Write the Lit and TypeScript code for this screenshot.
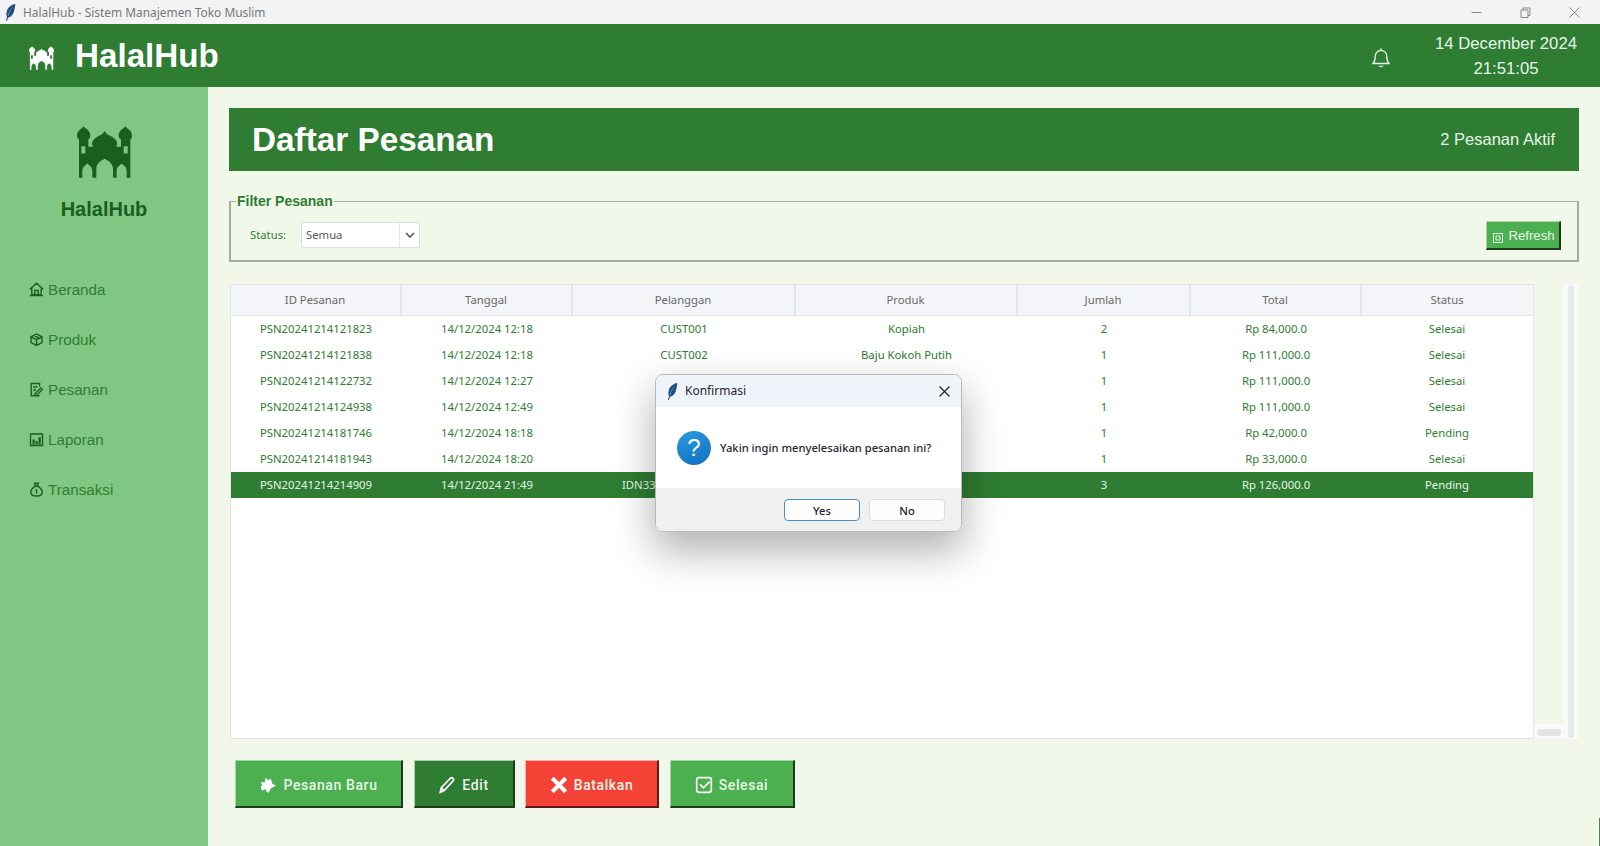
import { LitElement, css, html, svg } from "lit";
import { customElement } from "lit/decorators.js";
import { classMap } from "lit/directives/class-map.js";

const columns = ["ID Pesanan", "Tanggal", "Pelanggan", "Produk", "Jumlah", "Total", "Status"];

// pelanggan and produk are behind the dialog from the third row on, so they stay empty
const rows = [
    ["PSN20241214121823", "14/12/2024 12:18", "CUST001", "Kopiah", "2", "Rp 84,000.0", "Selesai"],
    ["PSN20241214121838", "14/12/2024 12:18", "CUST002", "Baju Kokoh Putih", "1", "Rp 111,000.0", "Selesai"],
    ["PSN20241214122732", "14/12/2024 12:27", "", "", "1", "Rp 111,000.0", "Selesai"],
    ["PSN20241214124938", "14/12/2024 12:49", "", "", "1", "Rp 111,000.0", "Selesai"],
    ["PSN20241214181746", "14/12/2024 18:18", "", "", "1", "Rp 42,000.0", "Pending"],
    ["PSN20241214181943", "14/12/2024 18:20", "", "", "1", "Rp 33,000.0", "Selesai"],
    ["PSN20241214214909", "14/12/2024 21:49", "IDN3321784590281456", "", "3", "Rp 126,000.0", "Pending"],
];

const mosque = svg`<path fill-rule="evenodd" d="M20 0C14 9 0 12 0 28C0 34 3 38 6 40V155H160V40C163 38 165 34 165 28C165 12 151 9 145 0C139 9 125 12 125 28C125 34 128 38 132 40V62H117C130 45 105 30 96 27C90 25 86 20 83 14C80 20 76 25 70 27C61 30 36 45 49 62H34V40C37 38 40 34 40 28C40 12 26 9 20 0ZM13 60H25V82H13ZM140 60H152V82H140ZM58 155V130C58 112 70 105 83 98C96 105 108 112 108 130V155ZM16 155V135C16 122 25 118 31 112C37 118 46 122 46 135V155ZM119 155V135C119 122 128 118 134 112C140 118 149 122 149 135V155Z"/>`;

const feather = html`<svg class="feather" viewBox="0 0 10 16">
    <path fill="#1f4e79" d="M9.6 0C6 .6 2.8 3 1.6 6.5.9 8.600 1 10.600 1.700 12.300L.8 16h.9l.9-3C5 12.600 7.400 10 8.300 6.800 8.900 4.600 9.400 2.200 9.600 0Z"/>
    <path fill="#8fb4d9" d="M7.800 2.200C5.600 4.600 3.800 8 2.800 11.600L2.300 11.400C3.200 7.800 5.200 4.400 7.800 2.200Z"/>
</svg>`;

const navIcons: Record<string, unknown> = {
    Beranda: svg`<path d="M.8 7.200 7.500 1.200l6.700 6M2.800 6.200V12.600h9.400V6.200M5.800 12.600V8.400h3.400v4.200M.8 13.600h13.400"/>`,
    Produk: svg`<path d="M7.500 2 13 4.800V10.600L7.500 13.400 2 10.600V4.800ZM2 4.800 7.500 7.600 13 4.800M7.500 7.600V13.400M4.800 3.400 10.200 6.200"/>`,
    Pesanan: svg`<path d="M10.600 4.600V1.500H2.200V13.800H10.600M6 11.800 11.800 6l1.600 1.600-5.800 5.800H6ZM4.200 5H8.400M4.200 8H7"/>`,
    Laporan: svg`<path d="M1.500 2H13.500V13.500H1.500Z"/><path fill="currentColor" stroke="none" d="M3.500 7.500H5.700V12.500H3.500ZM6.500 9H8.700V12.500H6.500ZM9.500 5H11.700V12.500H9.500Z"/>`,
    Transaksi: svg`<path d="M5.600 1.200H9.400L8.600 4H6.400ZM6 4.400C3.400 6 1.800 8 1.800 10.200 1.800 12.600 4 14 7.500 14S13.200 12.600 13.200 10.200C13.200 8 11.600 6 9 4.400ZM7.500 7.400V11.600M6.600 7.600H7.600"/>`,
};

const nav = ["Beranda", "Produk", "Pesanan", "Laporan", "Transaksi"];

@customElement("app-root")
export class AppRoot extends LitElement {
    static styles = css`
        :host {
            display: block;
            position: relative;
            width: 100%;
            height: 100vh;
            overflow: hidden;
            font-family: "Liberation Sans", Arial, sans-serif;
            background: #f1f8e9;
        }

        .titlebar {
            height: 24px;
            background: #f3f3f3;
            display: flex;
            align-items: center;
            padding-left: 5px;
            font-family: "Noto Sans", sans-serif;
            font-size: 11.9px;
            color: #777;
        }

        .feather {
            width: 11px;
            height: 17px;
            flex: none;
        }

        .titlebar span {
            margin-left: 7px;
            flex: 1;
        }

        .winctl {
            display: flex;
            gap: 38px;
            padding-right: 20px;
        }

        .winctl svg {
            width: 11px;
            height: 11px;
            fill: none;
            stroke: #888;
            stroke-width: 1;
            display: block;
        }

        .topbar {
            height: 63px;
            background: #2e7d32;
            display: flex;
            align-items: center;
            padding-left: 29px;
            color: #fff;
        }

        .topbar .logo {
            width: 25px;
            height: 24px;
            fill: #fff;
            margin-top: 4px;
        }

        .brand {
            font-size: 33.2px;
            font-weight: bold;
            margin-left: 21px;
            flex: 1;
        }

        .bell {
            width: 20px;
            height: 21px;
            fill: none;
            stroke: #e8f5e9;
            stroke-width: 1.3;
            margin-top: 4px;
            margin-right: 1px;
        }

        .clock {
            width: 150px;
            margin: 0 19px 0 39px;
            text-align: center;
            font-size: 16.7px;
            line-height: 25px;
            color: #e8f5e9;
            white-space: nowrap;
            margin-top: 1px;
        }

        .layout {
            height: calc(100vh - 87px);
            display: flex;
        }

        .sidebar {
            width: 208px;
            background: #81c784;
            box-sizing: border-box;
            padding-top: 39px;
            flex: none;
        }

        .sidebar .logo {
            display: block;
            width: 55px;
            height: 52px;
            margin: 0 0 0 77px;
            fill: #1b5e20;
        }

        .side-name {
            margin-top: 20px;
            text-align: center;
            font-size: 20px;
            font-weight: bold;
            line-height: 23px;
            color: #1b5e20;
        }

        .nav {
            margin-top: 43px;
        }

        .nav-item {
            height: 50px;
            display: flex;
            align-items: center;
            padding-left: 29px;
            font-size: 15.2px;
            color: #2e7d32;
        }

        .nav-item svg {
            width: 15px;
            height: 15px;
            margin-right: 4px;
            margin-top: 1px;
            fill: none;
            stroke: #1b5e20;
            stroke-width: 1.4;
            color: #1b5e20;
        }

        .main {
            flex: 1;
            min-width: 0;
            padding: 21px 21px 0;
        }

        .banner {
            height: 63px;
            background: #2e7d32;
            display: flex;
            align-items: center;
            justify-content: space-between;
            padding: 0 24px 0 23px;
            color: #fff;
        }

        .banner h1 {
            margin: 0;
            font-size: 33.3px;
            font-weight: bold;
        }

        .banner span {
            font-size: 16.5px;
            color: #e8f5e9;
        }

        fieldset {
            margin: 22px 0 0;
            padding: 0 16px 0 19px;
            height: 69px;
            box-sizing: border-box;
            border: 2px solid #a6ac9c;
            border-top-width: 1.5px;
            display: flex;
            align-items: center;
        }

        legend {
            padding: 0 1px;
            margin-left: -14px;
            font-size: 14px;
            font-weight: bold;
            line-height: 16px;
            color: #2e7d32;
        }

        .filter {
            display: flex;
            align-items: center;
            width: 100%;
        }

        .filter label {
            font-family: "Noto Sans", sans-serif;
            font-size: 11.3px;
            color: #2e7d32;
            width: 51px;
        }

        .select {
            width: 119px;
            height: 26px;
            box-sizing: border-box;
            background: #fff;
            border: 1px solid #d9dee2;
            border-radius: 2px;
            display: flex;
            align-items: center;
            font-family: "Noto Sans", sans-serif;
            font-size: 11.3px;
            color: #555;
        }

        .select span {
            flex: 1;
            padding-left: 4px;
        }

        .select i {
            width: 19px;
            height: 24px;
            border-left: 1px solid #e4e7e9;
            display: flex;
            align-items: center;
            justify-content: center;
        }

        .select svg {
            width: 10px;
            height: 6px;
            fill: none;
            stroke: #555;
            stroke-width: 1.6;
        }

        .raised {
            display: flex;
            align-items: center;
            justify-content: center;
            flex: none;
            box-sizing: border-box;
            border-style: solid;
            border-width: 1px 2px 2px 1px;
            border-color: #a5d6a7 #1b3d1d #1b3d1d #a5d6a7;
            color: #e8f5e9;
            font-family: Roboto, sans-serif;
        }

        .refresh {
            margin-left: auto;
            margin-top: 2px;
            width: 75px;
            height: 29px;
            background: #4caf50;
            font-family: "Liberation Sans", sans-serif;
            font-size: 13.2px;
            gap: 5px;
            padding-left: 2px;
        }

        .refresh svg {
            width: 10px;
            height: 10px;
            margin-top: 6px;
            fill: none;
            stroke: #e8f5e9;
            stroke-width: 1;
        }

        .grid-area {
            margin-top: 22px;
            height: 455px;
            display: flex;
        }

        .tree {
            width: 1304px;
            box-sizing: border-box;
            border: 1px solid #e2e6df;
            background: #fff;
            flex: none;
            font-family: "Noto Sans", sans-serif;
            font-size: 11.3px;
            margin-left: 1px;
        }

        .row {
            display: grid;
            grid-template-columns: 171px 171px 223px 222px 173px 171px 171px;
            height: 26px;
            align-items: center;
            text-align: center;
            color: #2e7d32;
        }

        .row div {
            padding: 0 1px 2px 0;
        }

        .row.head {
            height: 31px;
            box-sizing: border-box;
            align-items: stretch;
            color: #6a6a6a;
            background: #f3f5f8;
            border-bottom: 1px solid #e2e5ea;
        }

        .row.head div {
            display: flex;
            align-items: center;
            justify-content: center;
            border-right: 2px solid #e2e5ea;
        }

        .row.head div:last-child {
            border-right: none;
        }

        .row.selected {
            background: #2e7d32;
            color: #e8f5e9;
        }

        .bars {
            width: 44px;
            display: grid;
            grid-template-columns: 29px 15px;
            grid-template-rows: 1fr 15px;
        }

        .vbar {
            grid-column: 2;
            grid-row: 1 / 3;
            background: #fafbf9;
            padding: 1px 4px 1px 5px;
            box-sizing: border-box;
        }

        .vbar div {
            height: 100%;
            background: #e7e8ea;
            border-radius: 3px;
        }

        .hbar {
            grid-column: 1;
            grid-row: 2;
            background: #fafbf9;
            padding: 5px 2px 3px 3px;
        }

        .hbar div {
            height: 100%;
            background: #e3e4e5;
            border-radius: 3px;
        }

        .actions {
            margin-top: 21px;
            display: flex;
            gap: 10.5px;
            padding-left: 6px;
        }

        .actions .raised {
            height: 48px;
            padding-top: 2px;
            font-size: 14px;
            font-weight: 500;
            letter-spacing: 0.6px;
            gap: 6px;
        }

        .actions svg {
            width: 18px;
            height: 18px;
            fill: none;
            stroke: #fff;
            stroke-width: 1.5;
        }

        .new {
            width: 168px;
            background: #4caf50;
        }

        .edit {
            width: 101px;
            background: #2e7d32;
        }

        .cancel {
            width: 134px;
            background: #f44336;
            border-color: #ffb3ac #5e1a14 #5e1a14 #ffb3ac !important;
        }

        .done {
            width: 125px;
            background: #4caf50;
        }

        .dialog {
            position: absolute;
            left: 655px;
            top: 374px;
            width: 307px;
            height: 158px;
            border: 1px solid #b5b8bc;
            box-sizing: border-box;
            border-radius: 8px;
            overflow: hidden;
            display: flex;
            flex-direction: column;
            font-family: "Noto Sans", sans-serif;
            font-size: 11.2px;
            color: #2a2430;
        }

        .shadow {
            position: absolute;
            left: 655px;
            top: 374px;
            width: 307px;
            height: 158px;
            border-radius: 8px;
            box-shadow: 0 18px 40px 2px rgba(0, 0, 0, 0.3);
        }

        .dlg-title {
            height: 32px;
            background: #eff3fa;
            display: flex;
            align-items: center;
            padding: 0 11px 0 11px;
            flex: none;
        }

        .dlg-title span {
            flex: 1;
            margin-left: 7px;
            margin-top: -2px;
            font-size: 12px;
        }

        .dlg-title svg.x {
            width: 11px;
            height: 11px;
            stroke: #222;
            stroke-width: 1.2;
            fill: none;
        }

        .dlg-body {
            height: 81px;
            background: #fff;
            display: flex;
            align-items: center;
            padding-left: 21px;
            gap: 9px;
            flex: none;
            font-weight: 500;
        }

        .qmark {
            width: 34px;
            height: 34px;
            border-radius: 50%;
            background: linear-gradient(160deg, #2a9be0, #0f6fc0);
            color: #fff;
            display: flex;
            align-items: center;
            justify-content: center;
            font-family: "Liberation Sans", sans-serif;
            font-size: 24px;
            flex: none;
        }

        .dlg-foot {
            flex: 1;
            background: #f0f0f0;
            display: flex;
            justify-content: flex-end;
            align-items: flex-start;
            gap: 9px;
            padding: 11px 16px 0 0;
        }

        .dlg-foot button {
            width: 76px;
            height: 22px;
            padding: 0;
            box-sizing: border-box;
            background: #fdfdfd;
            border: 1px solid #dcdcdc;
            border-radius: 4px;
            font: inherit;
            font-weight: 500;
            color: #2a2430;
        }

        .dlg-foot button.primary {
            border: 1.5px solid #4a90c8;
        }

        .sliver {
            position: absolute;
            right: 0;
            bottom: 0;
            width: 1px;
            height: 28px;
            background: #4f7f52;
        }
    `;

    render() {
        return html`
            <div class="titlebar">
                ${feather}
                <span>HalalHub - Sistem Manajemen Toko Muslim</span>
                <div class="winctl">
                    <svg viewBox="0 0 11 11"><path d="M.5 5.500h10"/></svg>
                    <svg viewBox="0 0 11 11"><path d="M1 3h7v7.500H1ZM3 3V1h7v7.500H8"/></svg>
                    <svg viewBox="0 0 11 11"><path d="M.5.500l10 10M10.500.500l-10 10"/></svg>
                </div>
            </div>
            <div class="topbar">
                <svg class="logo" viewBox="0 0 165 155">${mosque}</svg>
                <div class="brand">HalalHub</div>
                <svg class="bell" viewBox="0 0 20 21">
                    <path d="M2 16.500c2-2 2.200-3.600 2.200-7 0-3.400 2.400-6.200 5.800-6.200s5.800 2.800 5.800 6.200c0 3.400.2 5 2.200 7ZM10 1.200v2M8 18.800c.5 1 3.500 1 4 0"/>
                </svg>
                <div class="clock">14 December 2024<br />21:51:05</div>
            </div>
            <div class="layout">
                <aside class="sidebar">
                    <svg class="logo" viewBox="0 0 165 155">${mosque}</svg>
                    <div class="side-name">HalalHub</div>
                    <nav class="nav">
                        ${nav.map(
                            (n) => html`<div class="nav-item">
                                <svg viewBox="0 0 15 15">${navIcons[n]}</svg>${n}
                            </div>`,
                        )}
                    </nav>
                </aside>
                <section class="main">
                    <div class="banner">
                        <h1>Daftar Pesanan</h1>
                        <span>2 Pesanan Aktif</span>
                    </div>
                    <fieldset>
                        <legend>Filter Pesanan</legend>
                        <div class="filter">
                            <label>Status:</label>
                            <div class="select">
                                <span>Semua</span>
                                <i><svg viewBox="0 0 10 6"><path d="M1 1l4 4 4-4"/></svg></i>
                            </div>
                            <div class="raised refresh">
                                <svg viewBox="0 0 10 10"><path d="M.5.500h9v9h-9ZM3 3h4v4H3Z"/></svg>
                                Refresh
                            </div>
                        </div>
                    </fieldset>
                    <div class="grid-area">
                        <div class="tree">
                            <div class="row head">${columns.map((c) => html`<div>${c}</div>`)}</div>
                            ${rows.map(
                                (r, i) => html`<div class=${classMap({ row: true, selected: i === rows.length - 1 })}>
                                    ${r.map((c) => html`<div>${c}</div>`)}
                                </div>`,
                            )}
                        </div>
                        <div class="bars">
                            <div class="vbar"><div></div></div>
                            <div class="hbar"><div></div></div>
                        </div>
                    </div>
                    <div class="actions">
                        <div class="raised new">
                            <svg viewBox="0 0 16 16"><path fill="#fff" stroke="none" d="M6 1.500 8.500 4 9 3l1.500-.5L12 7l3 1.500-3.500 2-1 .5-2 4-2-1.500-.5-2L2.500 13 1.500 9 3 8.500 1.500 5.500 5 5.500Z"/></svg>
                            Pesanan Baru
                        </div>
                        <div class="raised edit">
                            <svg viewBox="0 0 16 16"><path d="M2 14.500l.8-4L10.800 2.200c.8-.8 1.800-.8 2.500-.1s.7 1.700-.1 2.500L5.500 13Z"/><path d="M2.800 10.500 5.500 13"/></svg>
                            Edit
                        </div>
                        <div class="raised cancel">
                            <svg viewBox="0 0 16 16"><path stroke-width="3.6" d="M2 2l12 12M14 2 2 14"/></svg>
                            Batalkan
                        </div>
                        <div class="raised done">
                            <svg viewBox="0 0 16 16"><rect x="1.500" y="1.500" width="13" height="13" rx="2"/><path d="M4.500 7.500 7.500 10.500 13 5"/></svg>
                            Selesai
                        </div>
                    </div>
                </section>
            </div>
            <div class="shadow"></div>
            <div class="dialog">
                <div class="dlg-title">
                    ${feather}
                    <span>Konfirmasi</span>
                    <svg class="x" viewBox="0 0 11 11"><path d="M.5.500l10 10M10.500.500l-10 10"/></svg>
                </div>
                <div class="dlg-body">
                    <div class="qmark">?</div>
                    <div>Yakin ingin menyelesaikan pesanan ini?</div>
                </div>
                <div class="dlg-foot">
                    <button class="primary">Yes</button>
                    <button>No</button>
                </div>
            </div>
            <div class="sliver"></div>
        `;
    }
}

declare global {
    interface HTMLElementTagNameMap {
        "app-root": AppRoot;
    }
}
